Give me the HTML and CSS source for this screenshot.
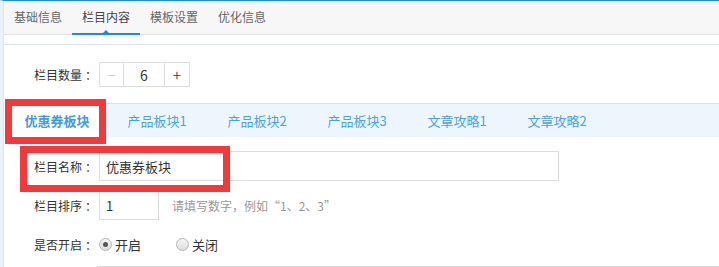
FILE: index.html
```html
<!DOCTYPE html>
<html lang="zh-CN">
<head>
  <meta charset="UTF-8" />
  <meta name="viewport" content="width=device-width, initial-scale=1.0" />
  <title>栏目内容</title>
  <link rel="stylesheet" href="styles.css">
</head>
<body>
<div class="page">
  <ul class="nav">
    <li>基础信息</li>
    <li class="active">栏目内容</li>
    <li>模板设置</li>
    <li>优化信息</li>
  </ul>
  <div class="subbar"></div>

  <div class="content">
    <div class="row count-row">
      <label class="label">栏目数量<i>：</i></label>
      <div class="stepper">
        <span class="step minus">&minus;</span>
        <span class="step value">6</span>
        <span class="step plus">+</span>
      </div>
    </div>

    <ul class="tabs">
      <li class="active">优惠券板块</li>
      <li>产品板块1</li>
      <li>产品板块2</li>
      <li>产品板块3</li>
      <li>文章攻略1</li>
      <li>文章攻略2</li>
    </ul>

    <div class="form">
      <div class="row">
        <label class="label">栏目名称<i>：</i></label>
        <input class="input wide" type="text" value="优惠券板块" />
      </div>
      <div class="row">
        <label class="label">栏目排序<i>：</i></label>
        <input class="input short" type="text" value="1" />
        <span class="hint">请填写数字，例如“1、2、3”</span>
      </div>
      <div class="row">
        <label class="label">是否开启<i>：</i></label>
        <span class="radio checked"></span><span class="radio-text">开启</span>
        <span class="radio"></span><span class="radio-text">关闭</span>
      </div>
      <div class="row last-row">
        <label class="label"></label>
        <div class="input full"></div>
      </div>
    </div>
  </div>

  <!-- annotation boxes -->
  <div class="mark mark-tab"></div>
  <div class="mark mark-name"></div>
</div>
</body>
</html>
```

FILE: styles.css
```css
* {
  box-sizing: border-box;
}
body {
  margin: 0;
  font-family: "Noto Sans CJK SC", "Microsoft YaHei", sans-serif;
  font-size: 12px;
  color: #333;
  background: #fff;
  height: 267px;
  overflow: hidden;
}
.page {
  position: relative;
  border-top: 1px solid #1a8fd6;
  border-left: 4px solid #eaf3fb;
}
.page:before {
  content: "";
  position: absolute;
  left: -1px;
  top: 0;
  bottom: 0;
  width: 1px;
  background: #dbe6ef;
}
ul {
  list-style: none;
  margin: 0;
  padding: 0;
}
.nav {
  display: flex;
  height: 34px;
  background: #f7f7f7;
  border-bottom: 1px solid #e2e2e2;
}
.nav li {
  position: relative;
  padding: 0 10px;
  line-height: 32px;
  color: #666;
}
.nav li.active {
  color: #444;
}
.nav li.active:after {
  content: "";
  position: absolute;
  left: 0;
  right: 0;
  bottom: -1px;
  height: 2px;
  background: #1a8fd6;
}
.nav li.active:before {
  content: "";
  position: absolute;
  left: 50%;
  bottom: 1px;
  margin-left: -3px;
  border: 3px solid transparent;
  border-bottom-color: #1a8fd6;
  border-top: 0;
}
.subbar {
  height: 10px;
  border-bottom: 1px solid #dce4ea;
}
.content {
  padding-top: 17px;
}
.row {
  display: flex;
  align-items: center;
  height: 30px;
  padding-left: 30px;
}
.label {
  width: 60px;
  margin-right: 5px;
  text-align: right;
  color: #333;
  white-space: nowrap;
}
.label i {
  font-style: normal;
  padding-left: 3px;
}
.count-row {
  height: 25px;
}
.stepper {
  display: flex;
  height: 25px;
  border: 1px solid #ddd;
}
.step {
  display: flex;
  align-items: center;
  justify-content: center;
  width: 24px;
  font-size: 15px;
  color: #555;
}
.minus {
  color: #ccc;
  border-right: 1px solid #ddd;
}
.value {
  width: 41px;
  font-size: 14px;
  color: #333;
  border-right: 1px solid #ddd;
}
.tabs {
  display: flex;
  margin: 16px 0 0 3px;
  height: 34px;
  background: #eef6fd;
  border-top: 1px solid #d8e3ec;
}
.tabs li {
  width: 100px;
  text-align: center;
  line-height: 33px;
  font-size: 13px;
  color: #4aa3e0;
}
.tabs li.active {
  background: #fff;
  font-weight: bold;
  color: #3f9be0;
}
.form {
  padding-top: 14px;
}
.form .row {
  margin-bottom: 9px;
}
.form .last-row {
  margin-top: -2px;
}
.input {
  height: 30px;
  border: 1px solid #dcdcdc;
  padding: 0 6px;
  font-family: inherit;
  font-size: 13px;
  color: #333;
  outline: none;
}
.wide {
  width: 460px;
}
.short {
  width: 60px;
  height: 29px;
}
.full {
  width: 640px;
}
.hint {
  margin-left: 13px;
  color: #999;
}
.radio {
  display: inline-block;
  position: relative;
  width: 13px;
  height: 13px;
  border: 1px solid #b5b5b5;
  border-radius: 50%;
  background: linear-gradient(#f4f4f4, #dedede);
  margin-right: 3px;
}
.radio.checked:after {
  content: "";
  position: absolute;
  left: 3px;
  top: 3px;
  width: 5px;
  height: 5px;
  border-radius: 50%;
  background: #555;
}
.radio-text {
  margin-right: 35px;
  font-size: 13px;
  color: #333;
}
.mark {
  position: absolute;
  border: 7px solid #f5393a;
}
.mark-tab {
  left: 1px;
  top: 98px;
  width: 101px;
  height: 45px;
}
.mark-name {
  left: 16px;
  top: 145px;
  width: 210px;
  height: 46px;
}
```
